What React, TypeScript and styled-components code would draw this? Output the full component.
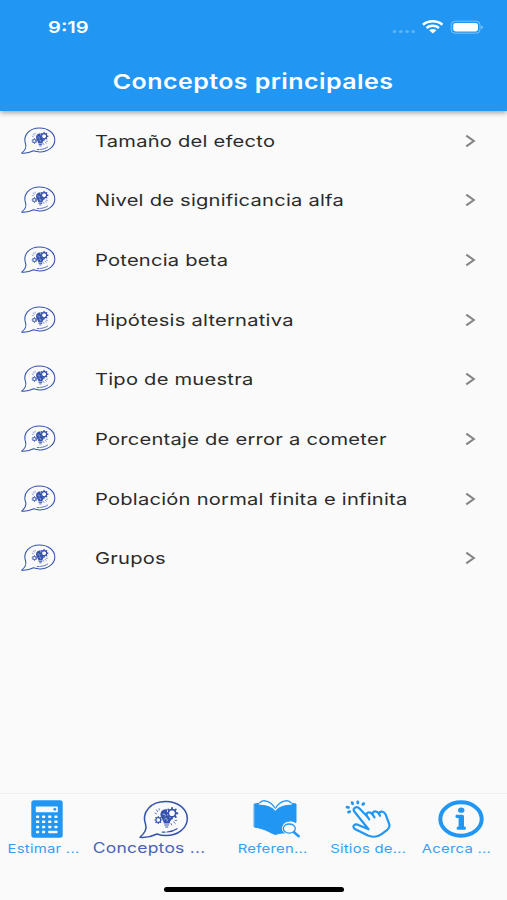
import React from "react";
import styled, { createGlobalStyle } from "styled-components";

const BLUE = "#2196f3";
const NAVY = "#3553ae";

const GlobalStyle = createGlobalStyle`
  * { box-sizing: border-box; }
  body { margin: 0; background: #fafafa; }
`;

const Screen = styled.div`
  width: 507px;
  height: 900px;
  display: flex;
  flex-direction: column;
  overflow: hidden;
  background: #fafafa;
  font-family: Inter, "Liberation Sans", sans-serif;
`;

const Header = styled.header`
  flex: none;
  height: 110.5px;
  background: ${BLUE};
  color: #fff;
  box-shadow: 0 2px 5px rgba(0, 0, 0, 0.35);
`;

const StatusBar = styled.div`
  height: 54px;
  padding: 0 24px 0 48px;
  display: flex;
  align-items: center;
  justify-content: space-between;
`;

/* Extended lettering: the glyphs are widened from their anchor edge. */
const Wide = styled.span<{ $stretch?: number; $anchor?: string }>`
  display: inline-block;
  white-space: nowrap;
  transform: scaleX(${(p) => p.$stretch ?? 1.22});
  transform-origin: ${(p) => p.$anchor ?? "left"} center;
`;

const Clock = styled.div`
  font-size: 16.5px;
  line-height: 20px;
  font-weight: 600;
`;

const StatusIcons = styled.div`
  display: flex;
  align-items: center;
`;

const TitleBar = styled.h1`
  margin: 0;
  height: 54px;
  display: flex;
  align-items: center;
  justify-content: center;
  font-size: 20.5px;
  font-weight: 570;
  letter-spacing: 0.35px;
`;

const List = styled.ul`
  flex: 1;
  margin: 0;
  padding: 0;
  list-style: none;
`;

const Row = styled.li`
  height: 59.67px;
  padding: 0.5px 31px 0 21px;
  display: flex;
  align-items: center;
`;

const RowIcon = styled.div`
  width: 73.5px;
  display: flex;
`;

const RowLabel = styled.div`
  flex: 1;
  font-size: 16.5px;
  line-height: 24px;
  letter-spacing: 0.19px;
  color: #2b2b2b;
`;

const NavBar = styled.nav`
  flex: none;
  height: 107px;
  border-top: 1px solid #f0f0f0;
  display: flex;
  flex-direction: column;
  align-items: center;
  justify-content: space-between;
  padding-bottom: 8.5px;
`;

const Tabs = styled.div`
  width: 100%;
  display: grid;
  grid-template-columns: 87px 125px 121px 71px 105px;
`;

const Tab = styled.div<{ $active?: boolean }>`
  display: flex;
  flex-direction: column;
  align-items: center;
  padding-top: 6px;
  color: ${(p) => (p.$active ? NAVY : BLUE)};
`;

const TabIcon = styled.div<{ $shift?: number; $active?: boolean }>`
  height: ${(p) => (p.$active ? 40 : 41)}px;
  display: flex;
  justify-content: center;
  margin-left: ${(p) => p.$shift ?? 0}px;
`;

const TabLabel = styled.div<{ $active?: boolean }>`
  font-size: ${(p) => (p.$active ? 14.3 : 12.2)}px;
  line-height: 16px;
  height: 16px;
  letter-spacing: 0.2px;
  opacity: 0.9;
`;

const HomeBar = styled.div`
  width: 180px;
  height: 5px;
  border-radius: 3px;
  background: #000;
`;

const gearTeeth = [0, 45, 90, 135, 180, 225, 270, 315];

function Gear({ x, y, r }: { x: number; y: number; r: number }) {
  return (
    <g transform={`translate(${x} ${y})`}>
      <circle r={r} strokeWidth={r * 0.42} />
      {gearTeeth.map((a) => (
        <path key={a} d={`M0 ${-r}V${-r * 1.45}`} strokeWidth={r * 0.5} transform={`rotate(${a})`} />
      ))}
    </g>
  );
}

function IdeaBubble({ width }: { width: number }) {
  return (
    <svg width={width} height={width * 0.8} viewBox="0 0 50 40" fill="none" stroke={NAVY} strokeLinecap="round" strokeLinejoin="round">
      <path
        strokeWidth="1.5"
        d="M1 37.3C5.5 33.5 8 29 6.6 24.6C2 11.5 12.5 1.5 26.5 1.5C39 1.5 48.3 9 48.3 18.5C48.3 28 39 35.6 27 35.6C23.5 35.6 20.5 35 18 34C12 37 6 37.8 1 37.3Z"
      />
      <path fill={NAVY} stroke="none" d="M28 9.2C23 8.6 21 12.4 21.6 15.6C22 18.4 24.2 19.5 24.9 23.5H30.6C31 20.5 32.9 19.5 33.4 18C30.4 18 28.2 16 28.2 13.6Z" />
      <path stroke="#fafafa" strokeWidth=".6" d="M24 14.2C26 13.8 27 15 26.2 16.2M25.6 19.2C27 17.6 28.4 18 28.2 20.8" />
      <path strokeWidth="1.2" d="M25.7 25H29.7M26.7 27H28.8" />
      <Gear x={33} y={13.2} r={3.7} />
      <Gear x={19.3} y={20} r={2.4} />
      <path strokeWidth=".8" d="M16 13L17.5 13.8M17.6 10L18.7 11.7M20.2 8.8V10M32 23.5L32.8 25M34.5 21.8L36.3 23.5M36 20.4H37.8" />
      <path strokeWidth="1.2" d="M23.3 32.2H26M28 32C32 31.7 35.5 30.5 38 28.7" />
    </svg>
  );
}

function CalculatorIcon() {
  return (
    <svg width="32" height="38" viewBox="0 0 32 38">
      <rect x=".3" y=".3" width="31.4" height="37.4" rx="2.6" fill={BLUE} />
      <rect x="4.8" y="6.6" width="22" height="5.6" rx=".5" fill="#fafafa" />
      <circle cx="23.8" cy="9.3" r="1.4" fill={BLUE} />
      {[16, 21.2, 26.3, 31.4].map((y, r) =>
        [5, 11, 17.2, 23.3].map((x, c) =>
          r === 3 && c > 1 ? null : <rect key={`${x}-${y}`} x={x} y={y - 0.6} width="3.2" height="2.5" rx=".7" fill="#fafafa" />
        )
      )}
      <rect x="17.2" y="30.8" width="9.3" height="2.4" rx=".7" fill="#fafafa" />
    </svg>
  );
}

function BookIcon() {
  return (
    <svg width="48" height="39" viewBox="0 0 48 39" fill="none" stroke={BLUE} strokeLinecap="round" strokeLinejoin="round">
      <path fill={BLUE} strokeWidth="1" d="M1.5 4L5 3.5C10 6 18 5.5 22.3 10.5C26.5 5.5 35 6 39.5 3.5L43 4V22.5A8 5.5 0 0 0 30 28.5C30 31.5 31.5 32.5 32 33C28.5 32.5 25 34 22.3 34.4C18.5 34 14 29 1.5 27Z" />
      <path strokeWidth="1.3" d="M6 3.5C8 1.4 9 .8 11 .7C17 1.6 20.5 4.5 22.3 9.5C24 4.5 27.5 1.6 33.5 .7C35.5 .8 36.8 1.4 38.8 3.5" />
      <path strokeWidth="1.3" stroke="#fafafa" d="M6.6 4C13 3.8 19 5 22.3 10C25.5 5 31.5 3.8 38.2 4" />
      <ellipse cx="36" cy="28.5" rx="6.4" ry="4.9" fill="#fafafa" stroke="#fafafa" strokeWidth="1.4" />
      <ellipse cx="36.3" cy="28.6" rx="6" ry="4.6" strokeWidth="1.3" />
      <path d="M41 32.2L45.7 36.2" strokeWidth="2.5" />
    </svg>
  );
}

function TapIcon() {
  return (
    <svg width="48" height="39" viewBox="0 0 48 39" fill="none" stroke={BLUE} strokeLinecap="round" strokeLinejoin="round" strokeWidth="2.2">
      <path d="M23.5 29.3L9.3 11.5C6.8 8.1 11.8 5.6 14.7 8.7L22 16.2C20 12.3 25.2 10.8 27.5 14.4C27 10.9 31.7 10.2 34 13.7C35 10.5 38.8 11.2 40.5 14.2L44.2 24.2C45.2 26.8 44 28.4 42 30.2L36.5 34.2C31.5 38.2 27 37 23 35.5L10.3 29.2C6.2 26.8 9.5 22.8 14 25.2Z" />
      <path d="M22 16.2L24.2 19.4M27.5 14.4L29.5 17.4M34 13.7L35 15.8" />
      <path strokeWidth="2.8" d="M3.5 12.1L4.7 11.7M2 7.1L3.5 7.5M7.1 2.6L7.6 3.8M12.8 1.8V3M18.7 3.6L17.8 4.4" />
    </svg>
  );
}

function InfoIcon() {
  return (
    <svg width="46" height="38" viewBox="0 0 46 38" fill={BLUE}>
      <ellipse cx="23" cy="19" rx="20.7" ry="16.7" fill="none" stroke={BLUE} strokeWidth="4" />
      <ellipse cx="23.2" cy="10.2" rx="3.2" ry="2.6" />
      <path d="M18.6 14.8H24.3Q26 14.8 26 16.4V26.6H26.7Q28 26.8 28 28.2Q28 29.8 26.3 29.8H20.2Q18.6 29.8 18.6 28.2Q18.6 26.8 20.2 26.6H20.6V18H18.8Q17.4 17.8 17.4 16.4Q17.4 14.8 18.6 14.8Z" />
    </svg>
  );
}

function StatusGlyphs() {
  return (
    <svg width="92" height="18" viewBox="0 0 92 18" fill="none">
      <g fill="#fff" opacity=".28">
        {[3.6, 9.8, 16, 22.2].map((x) => (
          <ellipse key={x} cx={x} cy="13.5" rx="1.9" ry="1.5" />
        ))}
      </g>
      <g stroke="#fff" strokeWidth="2.5">
        <path d="M32 6.8C37.5 2.2 46 2.2 51.5 6.8" />
        <path d="M35.5 10C39 7.1 44.5 7.1 48 10" />
      </g>
      <path fill="#fff" d="M38.2 12.3C40.2 10.7 43.4 10.7 45.4 12.3L41.8 15.4Z" />
      <rect x="60.2" y="3.2" width="28.8" height="12" rx="3.6" stroke="#fff" opacity=".42" />
      <rect x="62.2" y="5" width="24.8" height="8.4" rx="2.3" fill="#fff" />
      <path d="M90.2 7.5Q91.8 8 91.8 9.2Q91.8 10.4 90.2 11Z" fill="#fff" opacity=".5" />
    </svg>
  );
}

function Chevron() {
  return (
    <svg width="11" height="14" viewBox="0 0 11 14" fill="none" stroke="#858585" strokeWidth="2.1">
      <path d="M1.3 1.6L8.8 7L1.3 12.4" />
    </svg>
  );
}

const concepts = [
  "Tamaño del efecto",
  "Nivel de significancia alfa",
  "Potencia beta",
  "Hipótesis alternativa",
  "Tipo de muestra",
  "Porcentaje de error a cometer",
  "Población normal finita e infinita",
  "Grupos",
];

const tabs = [
  { label: "Estimar ...", icon: <CalculatorIcon />, shift: 6 },
  { label: "Conceptos ...", icon: <IdeaBubble width={50} />, shift: 28, active: true },
  { label: "Referen...", icon: <BookIcon />, shift: 9 },
  { label: "Sitios de...", icon: <TapIcon />, shift: 0 },
  { label: "Acerca ...", icon: <InfoIcon />, shift: 9 },
];

export default function App() {
  return (
    <Screen>
      <GlobalStyle />
      <Header>
        <StatusBar>
          <Clock>
            <Wide>9:19</Wide>
          </Clock>
          <StatusIcons>
            <StatusGlyphs />
          </StatusIcons>
        </StatusBar>
        <TitleBar>
          <Wide $anchor="center">Conceptos principales</Wide>
        </TitleBar>
      </Header>
      <List>
        {concepts.map((text) => (
          <Row key={text}>
            <RowIcon>
              <IdeaBubble width={35} />
            </RowIcon>
            <RowLabel>
              <Wide>{text}</Wide>
            </RowLabel>
            <Chevron />
          </Row>
        ))}
      </List>
      <NavBar>
        <Tabs>
          {tabs.map((t) => (
            <Tab key={t.label} $active={t.active}>
              <TabIcon $shift={t.shift} $active={t.active}>{t.icon}</TabIcon>
              <TabLabel $active={t.active}>
                <Wide $anchor="center">{t.label}</Wide>
              </TabLabel>
            </Tab>
          ))}
        </Tabs>
        <HomeBar />
      </NavBar>
    </Screen>
  );
}
